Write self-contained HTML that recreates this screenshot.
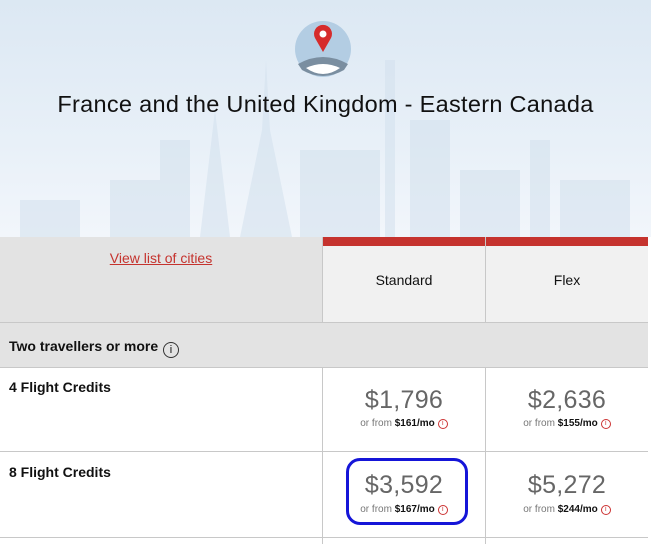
<!DOCTYPE html>
<html><head><meta charset="utf-8"><style>
*{margin:0;padding:0;box-sizing:border-box}
body{width:651px;height:544px;overflow:hidden;font-family:"Liberation Sans",sans-serif;background:#fff;position:relative}
.hero{position:absolute;left:0;top:0;width:651px;height:237px;background:linear-gradient(#dce8f3,#e8f0f8 60%,#f2f6fb);overflow:hidden}
h1{position:absolute;top:91px;left:0;width:651px;text-align:center;font-size:23.5px;font-weight:normal;color:#111;letter-spacing:0.3px}
.abs{position:absolute}
.line{position:absolute;background:#c8c8c8}
.price{position:absolute;text-align:center;font-size:25px;color:#666;font-weight:normal;letter-spacing:0.3px}
.sub{position:absolute;text-align:center;font-size:10px;color:#777}
.sub b{color:#111}
.i{display:inline-block;width:10px;height:10px;border:1px solid #c33;border-radius:50%;color:#c33;font-size:7px;line-height:8px;text-align:center;vertical-align:1px;margin-left:3px}
.lbl{position:absolute;left:9px;font-size:14px;font-weight:bold;color:#111}
</style></head><body>
<div class="hero">
<svg width="651" height="237" style="position:absolute;left:0;top:0" fill="#d3e1ee" opacity="0.55">
<polygon points="240,237 262,130 266,60 270,130 292,237"/>
<rect x="160" y="140" width="30" height="97"/><rect x="110" y="180" width="60" height="57"/>
<rect x="300" y="150" width="80" height="87"/><rect x="385" y="60" width="10" height="177"/>
<rect x="410" y="120" width="40" height="117"/><rect x="460" y="170" width="60" height="67"/>
<rect x="530" y="140" width="20" height="97"/><rect x="560" y="180" width="70" height="57"/>
<rect x="20" y="200" width="60" height="37"/><polygon points="200,237 215,110 230,237"/>
</svg>
<svg class="abs" style="left:294px;top:20px" width="58" height="58" viewBox="0 0 58 58">
<circle cx="29" cy="29" r="28" fill="#b3cde3"/>
<path d="M4,44 Q29,30 54,44 L50,50 Q29,62 8,50Z" fill="#7a8ea0"/>
<path d="M12,48 Q29,40 46,48 Q29,60 12,48Z" fill="#fff"/>
<path d="M29,32 L21,18 A9,9 0 1 1 37,18Z" fill="#d62b2b"/>
<circle cx="29" cy="14" r="3.5" fill="#fff"/>
</svg>
<h1>France and the United Kingdom - Eastern Canada</h1>
</div>
<div class="abs" style="left:0;top:237px;width:323px;height:85px;background:#e3e3e3"></div>
<div class="abs" style="left:323px;top:237px;width:325px;height:85px;background:#f1f1f1"></div>
<div class="abs" style="left:323px;top:237px;width:325px;height:9px;background:#c5332e"></div>
<div class="abs" style="left:0;top:322px;width:648px;height:45px;background:#e3e3e3"></div>
<div class="line" style="left:0;top:322px;width:648px;height:1px"></div>
<div class="line" style="left:0;top:367px;width:648px;height:1px"></div>
<div class="line" style="left:0;top:451px;width:648px;height:1px"></div>
<div class="line" style="left:0;top:537px;width:648px;height:1px"></div>
<div class="line" style="left:322px;top:237px;width:1px;height:85px"></div>
<div class="line" style="left:485px;top:237px;width:1px;height:85px"></div>
<div class="line" style="left:322px;top:367px;width:1px;height:177px"></div>
<div class="line" style="left:485px;top:367px;width:1px;height:177px"></div>
<div class="abs" style="left:0;top:250px;width:322px;text-align:center;font-size:14px;color:#c5332e;text-decoration:underline">View list of cities</div>
<div class="abs" style="left:323px;top:272px;width:162px;text-align:center;font-size:14px;color:#111">Standard</div>
<div class="abs" style="left:486px;top:272px;width:162px;text-align:center;font-size:14px;color:#111">Flex</div>
<div class="lbl" style="top:338px">Two travellers or more <span style="display:inline-block;width:16px;height:16px;border:1px solid #333;border-radius:50%;font-size:11px;line-height:14px;text-align:center;font-weight:normal;vertical-align:-2px;margin-left:1px">i</span></div>
<div class="lbl" style="top:379px">4 Flight Credits</div>
<div class="lbl" style="top:464px">8 Flight Credits</div>
<div class="price" style="left:323px;top:386px;width:162px">$1,796</div>
<div class="sub" style="left:323px;top:418px;width:162px">or from <b>$161/mo</b><span class="i">i</span></div>
<div class="price" style="left:486px;top:386px;width:162px">$2,636</div>
<div class="sub" style="left:486px;top:418px;width:162px">or from <b>$155/mo</b><span class="i">i</span></div>
<div class="price" style="left:323px;top:471px;width:162px">$3,592</div>
<div class="sub" style="left:323px;top:504px;width:162px">or from <b>$167/mo</b><span class="i">i</span></div>
<div class="price" style="left:486px;top:471px;width:162px">$5,272</div>
<div class="sub" style="left:486px;top:504px;width:162px">or from <b>$244/mo</b><span class="i">i</span></div>
<div class="abs" style="left:346px;top:458px;width:122px;height:67px;border:3px solid #1515d8;border-radius:14px"></div>
</body></html>
